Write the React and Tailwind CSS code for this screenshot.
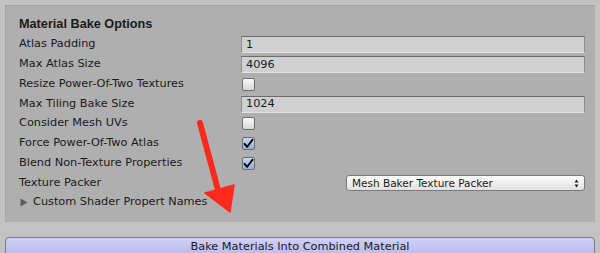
const rows = [
  { label: 'Atlas Padding', type: 'field', value: '1' },
  { label: 'Max Atlas Size', type: 'field', value: '4096' },
  { label: 'Resize Power-Of-Two Textures', type: 'check', value: false },
  { label: 'Max Tiling Bake Size', type: 'field', value: '1024' },
  { label: 'Consider Mesh UVs', type: 'check', value: false },
  { label: 'Force Power-Of-Two Atlas', type: 'check', value: true },
  { label: 'Blend Non-Texture Properties', type: 'check', value: true },
  { label: 'Texture Packer', type: 'select', value: 'Mesh Baker Texture Packer' },
];

const Field = ({ value }) => (
  <div className="w-[344px] h-[17px] bg-[#d0d0d0] border-t border-t-[#6c6c6c] border-l border-l-[#8e8e8e] border-r border-r-[#8e8e8e] border-b border-b-[#e2e2e2] flex items-center pl-[4px] text-[11.3px] leading-none">
    {value}
  </div>
);

const Check = ({ checked }) => (
  <div
    className={
      'w-[13px] h-[13px] ml-[1px] rounded-[2px] border border-[#6e6e6e] flex items-center justify-center ' +
      (checked ? 'bg-gradient-to-b from-[#c4d6ee] to-[#8fb0da]' : 'bg-gradient-to-b from-[#fafafa] to-[#d6d6d6]')
    }
  >
    {checked && (
      <svg width="11" height="11" viewBox="0 0 11 11">
        <path d="M1.5 5.8 L4.2 8.8 L9.6 1.6" fill="none" stroke="#000" strokeWidth="1.8" strokeLinecap="round" strokeLinejoin="round" />
      </svg>
    )}
  </div>
);

const Select = ({ value }) => (
  <div className="ml-[105px] w-[239px] h-[16px] rounded-[3px] border border-[#7a7a7a] bg-gradient-to-b from-[#fdfdfd] to-[#e2e2e2] flex items-center justify-between pl-[5px] pr-[5px] text-[10.5px] leading-none">
    <span>{value}</span>
    <svg width="5" height="9" viewBox="0 0 5 9">
      <path d="M2.5 0.5 L4.5 3.5 L0.5 3.5 Z M2.5 8.5 L4.5 5.5 L0.5 5.5 Z" fill="#222" />
    </svg>
  </div>
);

const App = () => {
  return (
    <div
      className="w-[600px] h-[253px] bg-[#c2c2c2] pt-[5px] overflow-hidden relative text-[#1a1a1a]"
      style={{ fontFamily: '"DejaVu Sans", "Liberation Sans", sans-serif' }}
    >
      <div className="ml-[5px] w-[590px] h-[217px] bg-[#afafaf] border-l border-t border-[#a3a3a3] pl-[13px] pt-[9px]">
        <div
          className="h-[20px] flex items-center font-bold text-[12.7px]"
          style={{ fontFamily: '"Liberation Sans", Arial, sans-serif' }}
        >
          Material Bake Options
        </div>
        {rows.map((row) => (
          <div key={row.label} className="h-[19.75px] flex items-center">
            <div className="w-[222px] text-[11.3px] whitespace-nowrap">{row.label}</div>
            {row.type === 'field' && <Field value={row.value} />}
            {row.type === 'check' && <Check checked={row.value} />}
            {row.type === 'select' && <Select value={row.value} />}
          </div>
        ))}
        <div className="h-[19.75px] flex items-center text-[11.3px]">
          <svg width="8" height="9" viewBox="0 0 8 9" className="mr-[5px] ml-[1px]">
            <path d="M0.5 0.5 L7.5 4.5 L0.5 8.5 Z" fill="#5c5c5c" />
          </svg>
          Custom Shader Propert Names
        </div>
      </div>

      <div className="mt-[15px] mx-[5px] h-[22px] rounded-t-[4px] border border-[#7c7c7c] bg-gradient-to-b from-[#cfcff6] to-[#b8b8ec] flex justify-center pt-[2px] text-[11.3px] leading-[14px]">
        Bake Materials Into Combined Material
      </div>

      <svg className="absolute left-0 top-0 pointer-events-none" width="600" height="253" viewBox="0 0 600 253">
        <line x1="200" y1="123" x2="218" y2="190" stroke="#ff2a1c" strokeWidth="6" strokeLinecap="round" />
        <path d="M205 193 L234 185 L230 212 Z" fill="#ff2a1c" stroke="#ff2a1c" strokeWidth="1.5" strokeLinejoin="round" />
      </svg>
    </div>
  );
};

export default App;
